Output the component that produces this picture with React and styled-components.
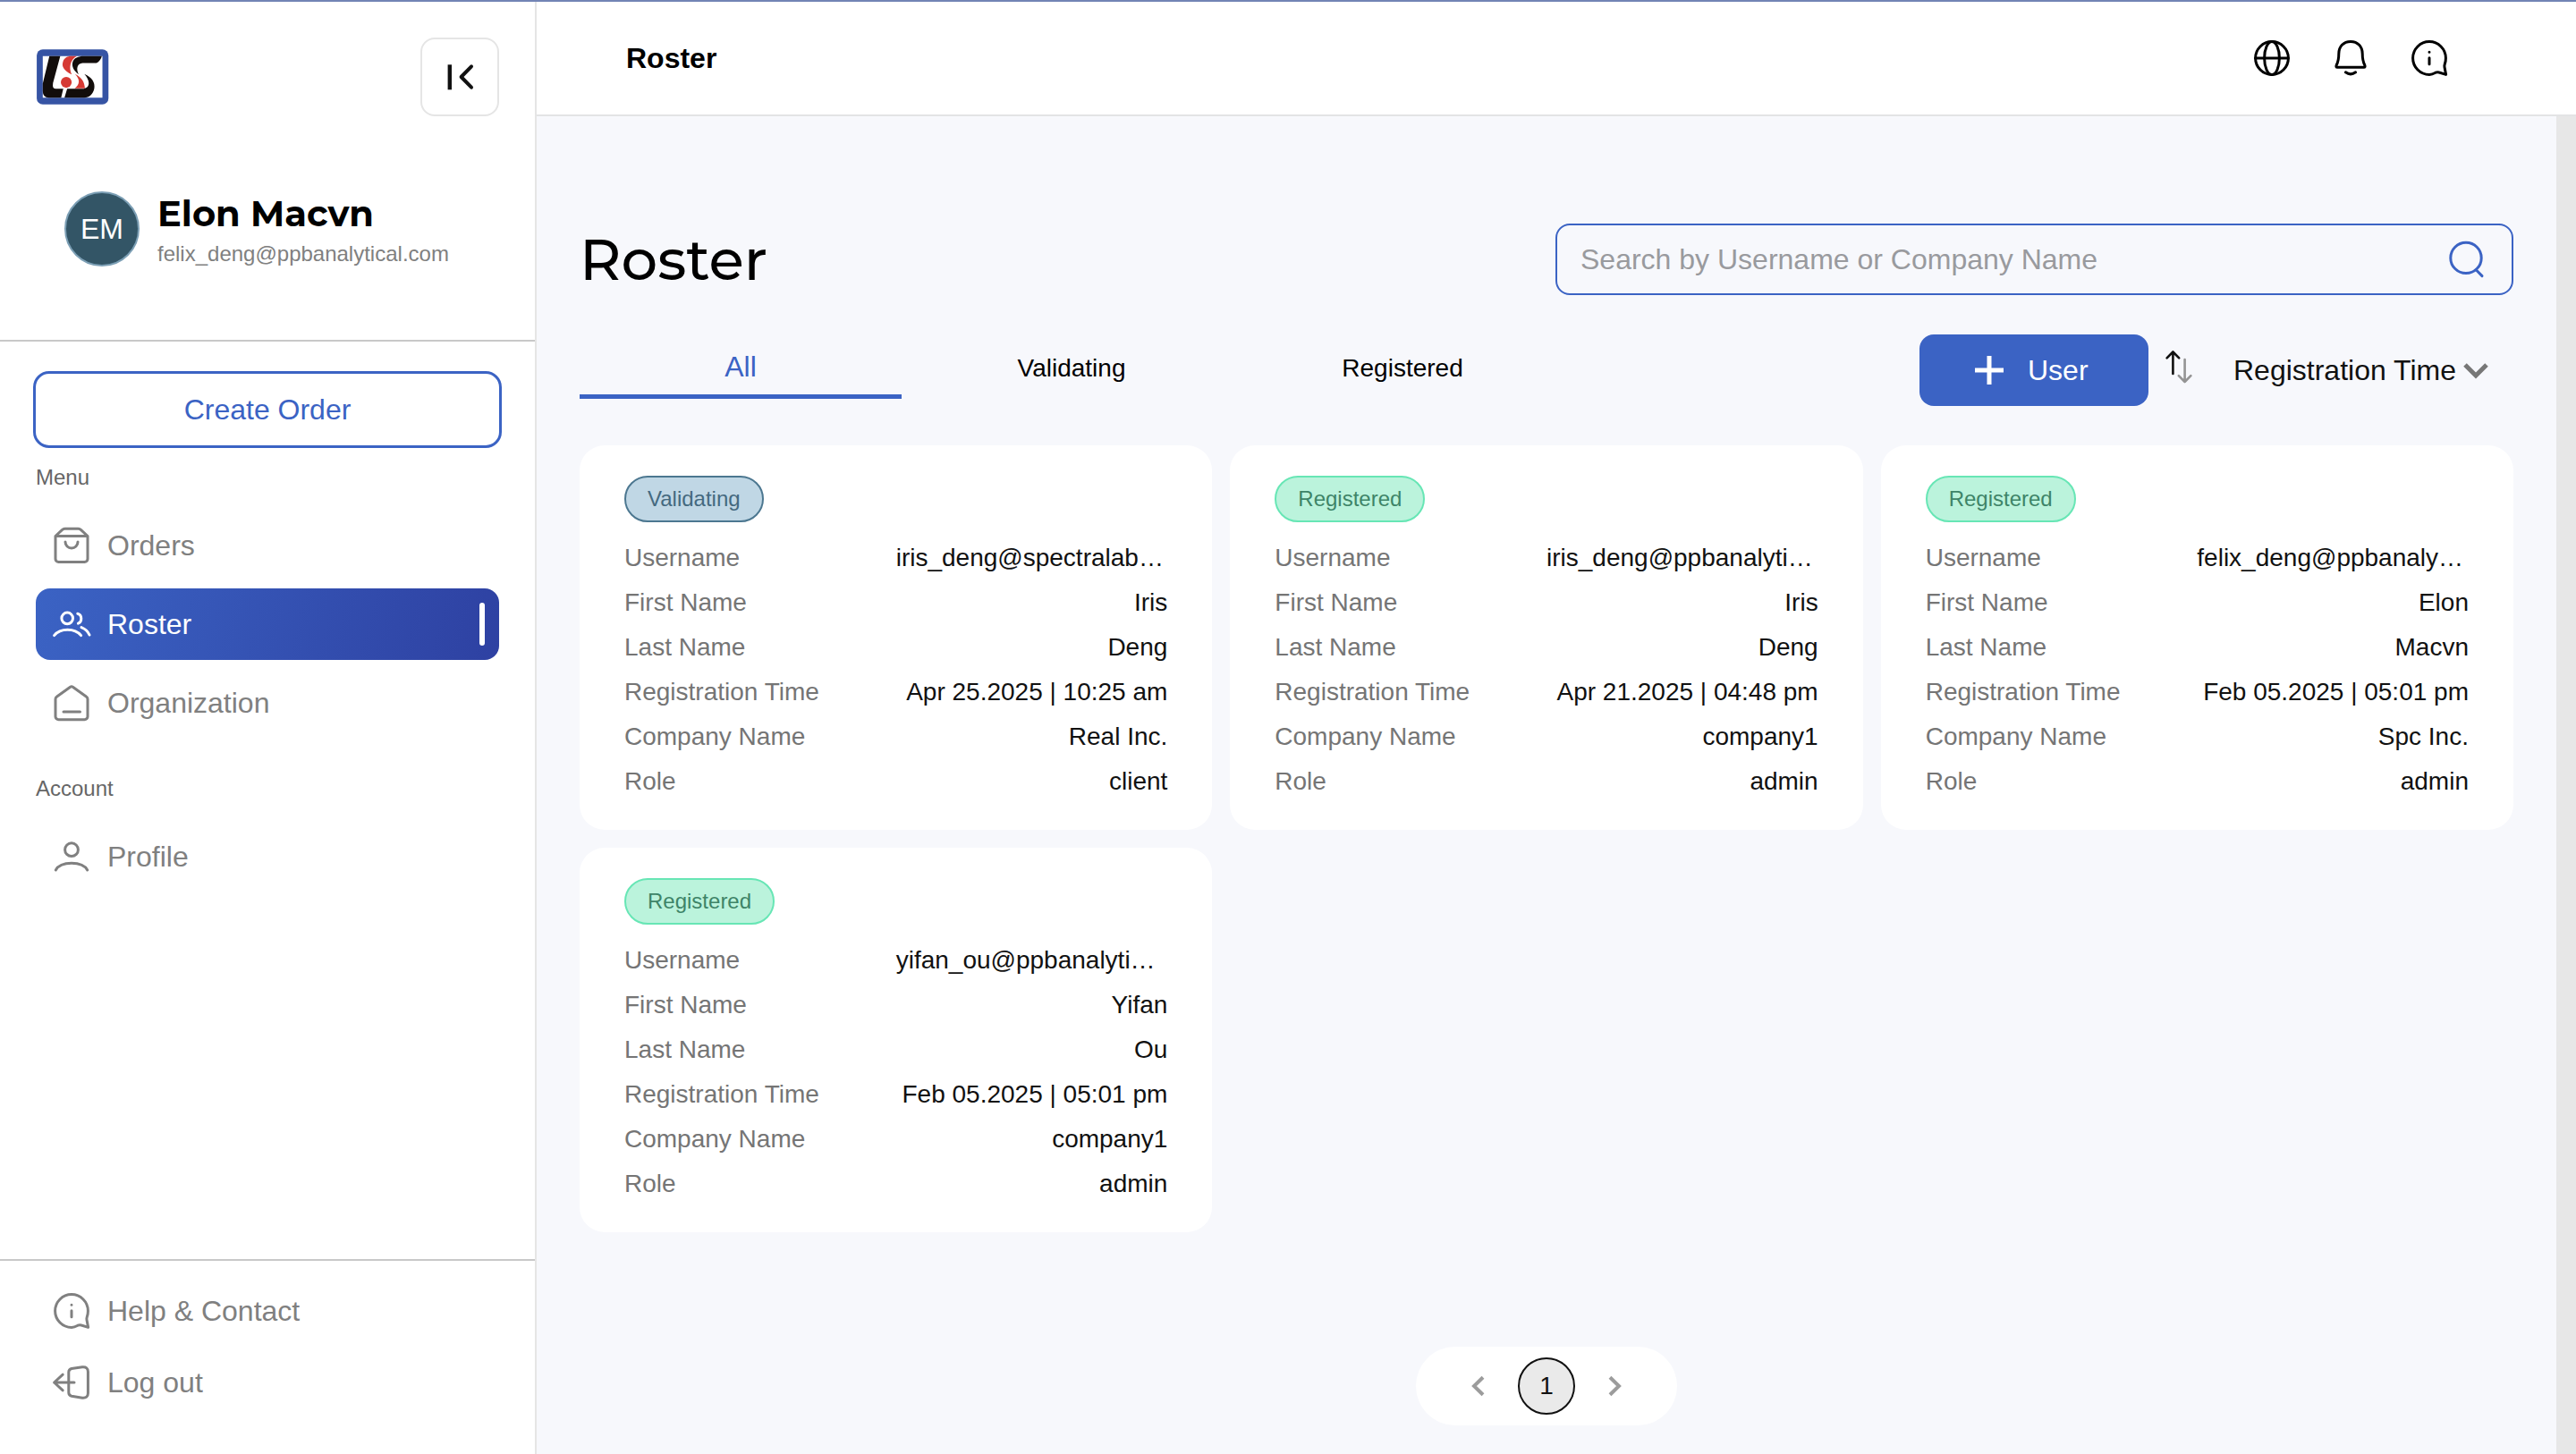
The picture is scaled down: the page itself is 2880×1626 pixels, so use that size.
import React, { useState } from "react";
import styled, { createGlobalStyle } from "styled-components";

const sans = `"Liberation Sans", Arial, Helvetica, sans-serif`;
const display = `Montserrat, Inter, "Open Sans", sans-serif`;
const blue = "#3b63c4";

const GlobalStyle = createGlobalStyle`
  *, *::before, *::after { box-sizing: border-box; }
  body { margin: 0; background: #f7f8fc; color: #111; font-family: ${sans}; }
  button, input, select { font-family: inherit; }
  h1, p, dl, dd, ul { margin: 0; padding: 0; }
  ul { list-style: none; }
`;

const Page = styled.div`
  display: flex;
  min-height: 100vh;
  border-top: 2px solid #7284b5;
`;

const Sidebar = styled.aside`
  display: flex;
  flex-direction: column;
  flex: none;
  width: 600px;
  background: #fff;
  border-right: 2px solid #e5e5e5;
`;

const Brand = styled.div`
  display: flex;
  align-items: center;
  justify-content: space-between;
  padding: 40px 40px 0;
`;

const CollapseButton = styled.button`
  display: flex;
  align-items: center;
  justify-content: center;
  width: 88px;
  height: 88px;
  padding: 0;
  color: #111;
  background: #fff;
  border: 2px solid #e5e5e5;
  border-radius: 16px;
`;

const Account = styled.div`
  display: flex;
  align-items: center;
  gap: 20px;
  padding: 84px 40px 82px 72px;
  border-bottom: 2px solid #c8c8c8;
`;

const Avatar = styled.div`
  display: flex;
  align-items: center;
  justify-content: center;
  width: 84px;
  height: 84px;
  color: #fff;
  font-size: 32px;
  background: #335566;
  border: 2px solid #7c9fb5;
  border-radius: 50%;
`;

const AccountText = styled.div`
  display: flex;
  flex-direction: column;
  gap: 6px;
`;

const AccountName = styled.p`
  color: #000;
  font: 700 40px/50px ${display};
`;

const AccountEmail = styled.p`
  color: #808080;
  font-size: 24px;
  line-height: 28px;
`;

const CreateBlock = styled.div`
  padding: 33px 37px 19px;
`;

const CreateButton = styled.button`
  width: 100%;
  height: 86px;
  color: ${blue};
  font-size: 32px;
  background: #fff;
  border: 3px solid ${blue};
  border-radius: 18px;
`;

const Nav = styled.nav`
  display: flex;
  flex-direction: column;
  gap: 42px;
  padding: 0 40px;
`;

const NavLabel = styled.p`
  margin-bottom: 22px;
  color: #666;
  font-size: 24px;
  line-height: 28px;
`;

const NavList = styled.ul`
  display: flex;
  flex-direction: column;
  gap: ${(p) => p.$gap || 0}px;
`;

const NavLink = styled.a`
  display: flex;
  align-items: center;
  gap: 16px;
  height: 80px;
  padding: 0 16px;
  color: ${(p) => (p.$active ? "#fff" : "#808080")};
  font-size: 32px;
  text-decoration: none;
  background: ${(p) => (p.$active ? "linear-gradient(105deg, #3b63c4, #2e41a2)" : "none")};
  border-radius: 16px;

  &::after {
    content: "";
    display: ${(p) => (p.$active ? "block" : "none")};
    width: 6px;
    height: 48px;
    margin-left: auto;
    background: #fff;
    border-radius: 3px;
  }
`;

const SidebarFooter = styled.div`
  margin-top: auto;
  padding: 16px 40px 40px;
  border-top: 2px solid #c8c8c8;
`;

const Main = styled.div`
  display: flex;
  flex: 1;
  flex-direction: column;
  min-width: 0;
`;

const TopBar = styled.header`
  display: flex;
  align-items: center;
  justify-content: space-between;
  height: 128px;
  padding: 0 140px 0 100px;
  background: #fff;
  border-bottom: 2px solid #e3e4e5;
`;

const Crumb = styled.p`
  color: #000;
  font-size: 32px;
  font-weight: 700;
`;

const TopActions = styled.div`
  display: flex;
  gap: 40px;
`;

const IconButton = styled.button`
  display: flex;
  padding: 0;
  color: ${(p) => p.$color || "#000"};
  background: none;
  border: 0;
`;

const Body = styled.div`
  display: flex;
  flex: 1;
`;

const Content = styled.main`
  display: flex;
  flex: 1;
  flex-direction: column;
  min-width: 0;
  padding: 120px 48px 32px;
`;

const Gutter = styled.div`
  flex: none;
  width: 22px;
  background: #e7e7e7;
`;

const TitleRow = styled.div`
  display: flex;
  align-items: center;
  justify-content: space-between;
  margin-bottom: 44px;
`;

const Title = styled.h1`
  color: #000;
  font: 500 64px/80px ${display};
`;

const Search = styled.form`
  display: flex;
  align-items: center;
  width: calc(50% - 10px);
  height: 80px;
  padding: 0 26px;
  border: 2px solid ${blue};
  border-radius: 16px;
`;

const SearchInput = styled.input`
  flex: 1;
  min-width: 0;
  padding: 0;
  color: #111;
  font-size: 32px;
  background: none;
  border: 0;
  outline: 0;

  &::placeholder { color: #999a9e; opacity: 1; }
`;

const Toolbar = styled.div`
  display: flex;
  align-items: center;
  justify-content: space-between;
  margin-bottom: 44px;
`;

const Tabs = styled.div`
  display: flex;
  align-items: baseline;
  align-self: flex-start;
  gap: 10px;
`;

const Tab = styled.button`
  width: 360px;
  height: 72px;
  padding: 5px 0 0;
  color: ${(p) => (p.$active ? blue : "#000")};
  font-size: ${(p) => (p.$active ? 32 : 28)}px;
  background: none;
  border: 0;
  border-bottom: 5px solid ${(p) => (p.$active ? blue : "transparent")};
`;

const Tools = styled.div`
  display: flex;
  align-items: center;
  gap: 10px;
`;

const AddButton = styled.button`
  display: flex;
  align-items: center;
  gap: 19px;
  width: 256px;
  height: 80px;
  padding: 0 54px;
  color: #fff;
  font-size: 32px;
  background: ${blue};
  border: 0;
  border-radius: 16px;
`;

const SortField = styled.label`
  display: grid;
  align-items: center;
  margin-left: 27px;

  > * { grid-area: 1 / 1; }
  > svg { justify-self: end; margin-right: 28px; color: #777; pointer-events: none; }
`;

const SortSelect = styled.select`
  height: 80px;
  padding: 0 63px 0 0;
  color: #111;
  font-size: 32px;
  background: none;
  border: 0;
  appearance: none;
`;

const Cards = styled.div`
  display: grid;
  grid-template-columns: repeat(3, minmax(0, 1fr));
  gap: 20px;
  margin-bottom: 44px;
`;

const Card = styled.article`
  padding: 34px 50px 29px;
  background: #fff;
  border-radius: 28px;
`;

const statusColors = {
  Validating: { text: "#44697f", fill: "#c0d7e5", line: "#4c7790" },
  Registered: { text: "#3e8468", fill: "#bbf3dc", line: "#67e6b5" },
};

const Badge = styled.span`
  display: inline-flex;
  align-items: center;
  height: 52px;
  margin-bottom: 15px;
  padding: 0 24px;
  color: ${(p) => statusColors[p.$status].text};
  font-size: 24px;
  background: ${(p) => statusColors[p.$status].fill};
  border: 2px solid ${(p) => statusColors[p.$status].line};
  border-radius: 26px;
  vertical-align: top;
`;

const Field = styled.div`
  display: flex;
  justify-content: space-between;
  font-size: 28px;
  line-height: 50px;
`;

const FieldName = styled.dt`
  color: #757575;
`;

const FieldValue = styled.dd`
  min-width: 50%;
  color: #111;
  text-align: ${(p) => (p.$long ? "left" : "right")};
  white-space: nowrap;
`;

const Pagination = styled.nav`
  display: flex;
  align-items: center;
  align-self: center;
  justify-content: space-between;
  width: 292px;
  height: 88px;
  margin-top: auto;
  padding: 0 57px;
  background: #fff;
  border-radius: 44px;
`;

const PageNumber = styled.button`
  width: 64px;
  height: 64px;
  padding: 0;
  color: #111;
  font-size: 28px;
  background: #eaeaea;
  border: 2px solid #111;
  border-radius: 50%;
`;

function Icon({ children, size = 48, stroke = 3 }) {
  return (
    <svg
      width={size}
      height={size}
      viewBox={`0 0 ${size} ${size}`}
      fill="none"
      stroke="currentColor"
      strokeWidth={stroke}
      strokeLinecap="round"
      strokeLinejoin="round"
      aria-hidden="true"
    >
      {children}
    </svg>
  );
}

const OrdersIcon = () => (
  <Icon>
    <path d="M6 13.5V39a3.5 3.5 0 0 0 3.5 3.5h29A3.5 3.5 0 0 0 42 39V13.5L34.6 6.6Q33.2 5.3 31.5 5.3h-15Q14.8 5.3 13.4 6.6ZM6 13.5H42" />
    <path d="M17 20a7 7 0 0 0 14 0" />
  </Icon>
);

const UsersIcon = () => (
  <Icon>
    <circle cx="19.2" cy="17.4" r="6.3" />
    <path d="M4.6 36.6C11.5 28.2 27.5 28.2 34.6 36.6" />
    <path d="M30.8 12.2C36 13.5 36 21.5 31.4 23.2" />
    <path d="M35 27.6C39.5 29.4 42.3 32 44 36" />
  </Icon>
);

const HomeIcon = () => (
  <Icon>
    <path d="M6 19.8Q6 18 7.6 17L22.6 6.3Q24 5.4 25.4 6.3L40.4 17Q42 18 42 19.8V39.2A3.5 3.5 0 0 1 38.5 42.7h-29A3.5 3.5 0 0 1 6 39.2Z" />
    <path d="M15 34H33.5" />
  </Icon>
);

const PersonIcon = () => (
  <Icon>
    <circle cx="24" cy="16.2" r="7.4" />
    <path d="M6.3 39C12 28.7 36 28.7 41.7 39" />
  </Icon>
);

const InfoIcon = () => (
  <Icon>
    <path d="M41.2 31C42 29 42.4 26.5 42.4 24A18.4 18.4 0 1 0 24 42.4C27 42.4 29.2 41.2 31 40.2Q33 39.2 35 40L42.6 42.4 41 34Q40.7 32.5 41.2 31Z" />
    <path d="M24 23.8V30.8M24 17.2V17.3" />
  </Icon>
);

const LogoutIcon = () => (
  <Icon>
    <path d="M20.8 12.5Q20.8 9.3 24 8.5L36 6.8Q42.4 6.2 42.4 12V36Q42.4 41.8 36 41.2L24 39.2Q20.8 38.5 20.8 35.3Z" />
    <path d="M27 24H4.6M14.2 15.2 4.6 24 14.2 32.8" />
  </Icon>
);

const GlobeIcon = () => (
  <Icon>
    <circle cx="24" cy="24" r="18.4" />
    <ellipse cx="24" cy="24" rx="8.4" ry="18.4" />
    <path d="M5.6 24H42.4" />
  </Icon>
);

const BellIcon = () => (
  <Icon>
    <path d="M24 5.4C16 5.4 10.8 11 10.8 19 10.8 25 10.4 27.5 8.2 31.8Q7.2 34.2 9.2 34.2H38.8Q40.8 34.2 39.8 31.8C37.6 27.5 37.2 25 37.2 19 37.2 11 32 5.4 24 5.4Z" />
    <path d="M18.4 39.8Q24 44 29.6 39.8" />
  </Icon>
);

const SearchIcon = () => (
  <Icon>
    <circle cx="23" cy="22.4" r="17.2" />
    <path d="M34.5 36 41 42.6" />
  </Icon>
);

const CollapseIcon = () => (
  <Icon stroke={4}>
    <path d="M12.8 10.3V38.3" strokeLinecap="butt" strokeWidth="4.4" />
    <path d="M37 12.3 25.6 24 37 35.7" />
  </Icon>
);

const PlusIcon = () => (
  <Icon stroke={5}>
    <path d="M24 8V40M8 24H40" strokeLinecap="butt" />
  </Icon>
);

const SortIcon = () => (
  <Icon stroke={2.6}>
    <path d="M17.4 28V3.5M10.6 10.4 17.4 3.5 24.2 10.4" stroke="#111" />
    <path d="M30.6 12V37M23.8 30.2 30.6 37 37.4 30.2" stroke="#949494" />
  </Icon>
);

const ChevronDown = () => (
  <Icon size={28} stroke={5}>
    <path d="M2 8 14 20 26 8" strokeLinecap="butt" strokeLinejoin="miter" />
  </Icon>
);

const ChevronLeft = () => (
  <Icon size={24} stroke={4}>
    <path d="M18 2.2 8 12 18 21.8" strokeLinecap="butt" strokeLinejoin="miter" />
  </Icon>
);

const ChevronRight = () => (
  <Icon size={24} stroke={4}>
    <path d="M6 2.2 16 12 6 21.8" strokeLinecap="butt" strokeLinejoin="miter" />
  </Icon>
);

const Logo = () => (
  <svg width="82" height="62" viewBox="31 46 243 184" role="img" aria-label="Company logo">
    <rect x="34" y="47" width="238" height="182" rx="20" fill="#3654a4" />
    <path d="M54 69H252V207H54Z" fill="#fff" />
    <path d="M76 69H112L88 158Q85 177 96 177H122L115 207H74Q54 207 54 185V160Z" fill="#120d0b" />
    <path d="M167 69C144 82 140 108 150 130 124 116 116 104 121 88 125 75 136 69 148 69Z" fill="#d63a34" />
    <path d="M190 69H250Q246 85 232 92H186C168 94 164 110 173 130 156 116 150 104 153 90 157 75 172 69 190 69Z" fill="#120d0b" />
    <path d="M161 128C184 140 192 154 194 176H160C178 162 178 146 161 128Z" fill="#d63a34" />
    <path d="M192 128C218 140 228 156 225 176 221 196 208 207 192 207H126L135 177H190C214 172 210 148 192 128Z" fill="#120d0b" />
    <circle cx="132" cy="156" r="18" fill="#d63a34" />
  </svg>
);

const users = [
  { status: "Validating", username: "iris_deng@spectralab…", first: "Iris", last: "Deng", time: "Apr 25.2025 | 10:25 am", company: "Real Inc.", role: "client" },
  { status: "Registered", username: "iris_deng@ppbanalyti…", first: "Iris", last: "Deng", time: "Apr 21.2025 | 04:48 pm", company: "company1", role: "admin" },
  { status: "Registered", username: "felix_deng@ppbanaly…", first: "Elon", last: "Macvn", time: "Feb 05.2025 | 05:01 pm", company: "Spc Inc.", role: "admin" },
  { status: "Registered", username: "yifan_ou@ppbanalyti…", first: "Yifan", last: "Ou", time: "Feb 05.2025 | 05:01 pm", company: "company1", role: "admin" },
];

const fields = [
  ["Username", "username"],
  ["First Name", "first"],
  ["Last Name", "last"],
  ["Registration Time", "time"],
  ["Company Name", "company"],
  ["Role", "role"],
];

const tabs = ["All", "Validating", "Registered"];

function NavItem({ icon, label, active }) {
  return (
    <li>
      <NavLink href="#" $active={active} aria-current={active ? "page" : undefined}>
        {icon}
        {label}
      </NavLink>
    </li>
  );
}

function UserCard({ user }) {
  return (
    <Card>
      <Badge $status={user.status}>{user.status}</Badge>
      <dl>
        {fields.map(([label, key]) => (
          <Field key={key}>
            <FieldName>{label}</FieldName>
            <FieldValue $long={key === "username"}>{user[key]}</FieldValue>
          </Field>
        ))}
      </dl>
    </Card>
  );
}

export default function App() {
  const [tab, setTab] = useState("All");
  const shown = users.filter((u) => tab === "All" || u.status === tab);

  return (
    <>
      <GlobalStyle />
      <Page>
        <Sidebar>
          <Brand>
            <Logo />
            <CollapseButton aria-label="Collapse sidebar">
              <CollapseIcon />
            </CollapseButton>
          </Brand>
          <Account>
            <Avatar>EM</Avatar>
            <AccountText>
              <AccountName>Elon Macvn</AccountName>
              <AccountEmail>felix_deng@ppbanalytical.com</AccountEmail>
            </AccountText>
          </Account>
          <CreateBlock>
            <CreateButton>Create Order</CreateButton>
          </CreateBlock>
          <Nav>
            <div>
              <NavLabel>Menu</NavLabel>
              <NavList $gap={8}>
                <NavItem icon={<OrdersIcon />} label="Orders" />
                <NavItem icon={<UsersIcon />} label="Roster" active />
                <NavItem icon={<HomeIcon />} label="Organization" />
              </NavList>
            </div>
            <div>
              <NavLabel>Account</NavLabel>
              <NavList>
                <NavItem icon={<PersonIcon />} label="Profile" />
              </NavList>
            </div>
          </Nav>
          <SidebarFooter>
            <NavList>
              <NavItem icon={<InfoIcon />} label="Help & Contact" />
              <NavItem icon={<LogoutIcon />} label="Log out" />
            </NavList>
          </SidebarFooter>
        </Sidebar>

        <Main>
          <TopBar>
            <Crumb>Roster</Crumb>
            <TopActions>
              <IconButton aria-label="Language"><GlobeIcon /></IconButton>
              <IconButton aria-label="Notifications"><BellIcon /></IconButton>
              <IconButton aria-label="Help"><InfoIcon /></IconButton>
            </TopActions>
          </TopBar>
          <Body>
            <Content>
              <TitleRow>
                <Title>Roster</Title>
                <Search role="search" onSubmit={(e) => e.preventDefault()}>
                  <SearchInput
                    type="text"
                    aria-label="Search by Username or Company Name"
                    placeholder="Search by Username or Company Name"
                  />
                  <IconButton $color={blue} aria-label="Search"><SearchIcon /></IconButton>
                </Search>
              </TitleRow>
              <Toolbar>
                <Tabs role="tablist">
                  {tabs.map((name) => (
                    <Tab
                      key={name}
                      role="tab"
                      aria-selected={tab === name}
                      $active={tab === name}
                      onClick={() => setTab(name)}
                    >
                      {name}
                    </Tab>
                  ))}
                </Tabs>
                <Tools>
                  <AddButton>
                    <PlusIcon />
                    User
                  </AddButton>
                  <IconButton aria-label="Sort direction"><SortIcon /></IconButton>
                  <SortField>
                    <SortSelect aria-label="Sort by">
                      <option>Registration Time</option>
                    </SortSelect>
                    <ChevronDown />
                  </SortField>
                </Tools>
              </Toolbar>
              <Cards>
                {shown.map((user) => (
                  <UserCard key={user.username} user={user} />
                ))}
              </Cards>
              <Pagination aria-label="Pages">
                <IconButton $color="#9c9c9c" aria-label="Previous page"><ChevronLeft /></IconButton>
                <PageNumber aria-current="page">1</PageNumber>
                <IconButton $color="#9c9c9c" aria-label="Next page"><ChevronRight /></IconButton>
              </Pagination>
            </Content>
            <Gutter />
          </Body>
        </Main>
      </Page>
    </>
  );
}
